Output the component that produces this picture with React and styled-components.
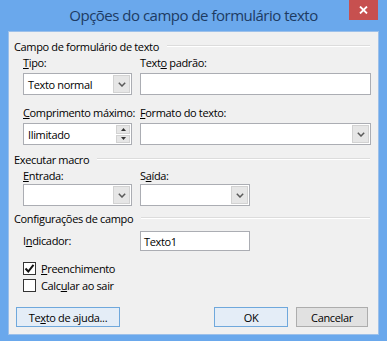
import React from "react";
import styled, { createGlobalStyle } from "styled-components";

const GlobalStyle = createGlobalStyle`
	html, body {
		margin: 0;
		padding: 0;
		background: #6aa8ec;
	}
	body {
		font-family: "Open Sans", "Noto Sans", sans-serif;
		font-size: 11px;
		letter-spacing: -0.35px;
		color: #000;
	}
`;

const Chevron = () => (
	<svg width="8" height="5" viewBox="0 0 8 5">
		<path d="M0.8 0.8 L4 4 L7.2 0.8" fill="none" stroke="#5a5a5a" strokeWidth="1.5" />
	</svg>
);

const CloseGlyph = () => (
	<svg width="9" height="8" viewBox="0 0 9 8">
		<path d="M1 0.5 L8 7.5 M8 0.5 L1 7.5" stroke="#fff" strokeWidth="1.8" />
	</svg>
);

const CheckGlyph = () => (
	<svg width="11" height="11" viewBox="0 0 11 11">
		<path d="M1.5 5.5 L4.3 8.5 L9.5 1.8" fill="none" stroke="#111" strokeWidth="2" />
	</svg>
);

const Underline = ({ children }) => <u>{children}</u>;

const App = () => {
	return (
		<>
			<GlobalStyle />
			<Window>
				<TitleBar>
					<Title>Opções do campo de formulário texto</Title>
					<CloseButton>
						<CloseGlyph />
					</CloseButton>
				</TitleBar>
				<Panel>
					<GroupHeader>
						<span>Campo de formulário de texto</span>
						<Rule />
					</GroupHeader>
					<GroupBody>
						<FieldGrid $right="231px">
							<Label>
								<Underline>T</Underline>ipo:
							</Label>
							<Label>
								Text<Underline>o</Underline> padrão:
							</Label>
							<Combo>
								<ComboText>Texto normal</ComboText>
								<ComboButton>
									<Chevron />
								</ComboButton>
							</Combo>
							<TextBox />
						</FieldGrid>
						<FieldGrid $right="231px" $top="10px">
							<Label>
								<Underline>C</Underline>omprimento máximo:
							</Label>
							<Label>
								<Underline>F</Underline>ormato do texto:
							</Label>
							<Combo>
								<ComboText>Ilimitado</ComboText>
								<Spinner>
									<SpinHalf>
										<svg width="5" height="3" viewBox="0 0 5 3">
											<path d="M0 3 L2.5 0 L5 3 Z" fill="#333" />
										</svg>
									</SpinHalf>
									<SpinHalf>
										<svg width="5" height="3" viewBox="0 0 5 3">
											<path d="M0 0 L2.5 3 L5 0 Z" fill="#333" />
										</svg>
									</SpinHalf>
								</Spinner>
							</Combo>
							<Combo>
								<ComboText />
								<ComboButton>
									<Chevron />
								</ComboButton>
							</Combo>
						</FieldGrid>
					</GroupBody>

					<GroupHeader $top="6px">
						<span>Executar macro</span>
						<Rule />
					</GroupHeader>
					<GroupBody>
						<FieldGrid $right="110px" $labelGap="0px">
							<Label>
								<Underline>E</Underline>ntrada:
							</Label>
							<Label>
								S<Underline>a</Underline>ída:
							</Label>
							<Combo>
								<ComboText />
								<ComboButton>
									<Chevron />
								</ComboButton>
							</Combo>
							<Combo>
								<ComboText />
								<ComboButton>
									<Chevron />
								</ComboButton>
							</Combo>
						</FieldGrid>
					</GroupBody>

					<GroupHeader $top="4px">
						<span>Configurações de campo</span>
						<Rule />
					</GroupHeader>
					<GroupBody>
						<InlineRow>
							<Label>
								I<Underline>n</Underline>dicador:
							</Label>
							<TextBox $small>Texto1</TextBox>
						</InlineRow>
						<CheckRow $top="9px">
							<CheckBox>
								<CheckGlyph />
							</CheckBox>
							<span>
								<Underline>P</Underline>reenchimento
							</span>
						</CheckRow>
						<CheckRow $top="1px">
							<CheckBox />
							<span>
								Calc<Underline>u</Underline>lar ao sair
							</span>
						</CheckRow>
					</GroupBody>

					<Footer>
						<Button $width="104px" $focus>
							Te<Underline>x</Underline>to de ajuda...
						</Button>
						<ButtonGroup>
							<Button $width="74px" $focus>
								OK
							</Button>
							<Button $width="72px">Cancelar</Button>
						</ButtonGroup>
					</Footer>
				</Panel>
			</Window>
		</>
	);
};

export default App;

const Window = styled.div`
	width: 387px;
	height: 341px;
	box-sizing: border-box;
	background: #6aa8ec;
	padding: 0 8px 6px;
	display: flex;
	flex-direction: column;
`;

const TitleBar = styled.div`
	height: 31px;
	display: grid;
	grid-template-columns: 1fr auto 1fr;
	align-items: center;
`;

const Title = styled.div`
	grid-column: 2;
	font-size: 15px;
	letter-spacing: -0.5px;
	color: #1d3b63;
	margin-top: -1px;
	white-space: nowrap;
`;

const CloseButton = styled.div`
	grid-column: 3;
	justify-self: end;
	align-self: start;
	width: 29px;
	height: 20px;
	margin-right: 1px;
	background: #c7504f;
	display: flex;
	align-items: center;
	justify-content: center;
`;

const Panel = styled.div`
	flex: 1;
	background: #f0f0f0;
	border: 1px solid #9cc0ea;
	padding: 6px 7px 0 5px;
	display: flex;
	flex-direction: column;
`;

const GroupHeader = styled.div`
	display: flex;
	align-items: center;
	gap: 8px;
	height: 16px;
	margin-top: ${(p) => p.$top || "0"};
	white-space: nowrap;
`;

const Rule = styled.div`
	flex: 1;
	height: 0;
	border-top: 1px solid #dcdcdc;
	border-bottom: 1px solid #fff;
	margin-right: 1px;
`;

const GroupBody = styled.div`
	padding-left: 9px;
	display: flex;
	flex-direction: column;
`;

const FieldGrid = styled.div`
	display: grid;
	grid-template-columns: 109px ${(p) => p.$right};
	column-gap: 8px;
	row-gap: ${(p) => p.$labelGap || "2px"};
	margin-top: ${(p) => p.$top || "1px"};
`;

const Label = styled.div`
	height: 16px;
	line-height: 16px;
	white-space: nowrap;
`;

const TextBox = styled.div`
	box-sizing: border-box;
	height: ${(p) => (p.$small ? "20px" : "22px")};
	width: ${(p) => (p.$small ? "110px" : "auto")};
	background: #fff;
	border: 1px solid #abadb3;
	padding: 0 3px;
	display: flex;
	align-items: center;
`;

const Combo = styled.div`
	box-sizing: border-box;
	height: 22px;
	background: #fff;
	border: 1px solid #abadb3;
	display: flex;
	align-items: stretch;
`;

const ComboText = styled.div`
	flex: 1;
	display: flex;
	align-items: center;
	padding: 0 4px;
`;

const ComboButton = styled.div`
	width: 15px;
	margin: 1px;
	background: #e6e6e6;
	border: 1px solid #d2d2d2;
	display: flex;
	align-items: center;
	justify-content: center;
`;

const Spinner = styled.div`
	width: 14px;
	margin: 1px;
	display: flex;
	flex-direction: column;
	gap: 1px;
`;

const SpinHalf = styled.div`
	flex: 1;
	background: #e6e6e6;
	border: 1px solid #d2d2d2;
	display: flex;
	align-items: center;
	justify-content: center;
`;

const InlineRow = styled.div`
	display: grid;
	grid-template-columns: 117px auto;
	align-items: center;
	margin-top: 5px;
`;

const CheckRow = styled.div`
	display: flex;
	align-items: center;
	gap: 5px;
	height: 16px;
	margin-top: ${(p) => p.$top};
`;

const CheckBox = styled.div`
	box-sizing: border-box;
	width: 13px;
	height: 13px;
	background: #fff;
	border: 1px solid #333;
	display: flex;
	align-items: center;
	justify-content: center;
`;

const Footer = styled.div`
	display: flex;
	justify-content: space-between;
	margin-top: 14px;
	padding: 0 3px 0 2px;
`;

const ButtonGroup = styled.div`
	display: flex;
	gap: 8px;
`;

const Button = styled.div`
	box-sizing: border-box;
	width: ${(p) => p.$width};
	height: 20px;
	border: 1px solid ${(p) => (p.$focus ? "#6fa8dc" : "#adadad")};
	background: ${(p) => (p.$focus ? "#e4edf7" : "#e1e1e1")};
	display: flex;
	align-items: center;
	justify-content: center;
	white-space: nowrap;
`;
